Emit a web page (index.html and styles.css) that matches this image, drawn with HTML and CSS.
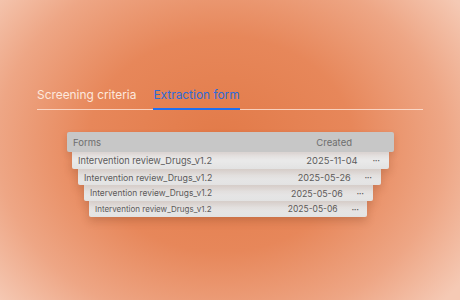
FILE: index.html
```html
<!DOCTYPE html>
<html>
<head>
	<title>Forms</title>
	<link rel="stylesheet" href="styles.css">
</head>
<body>
	<div class="scene">
		<div class="tabs">
			<div class="tab">Screening criteria</div>
			<div class="tab active">Extraction form</div>
		</div>

		<div class="stack">
			<div class="head">
				<span>Forms</span>
				<span class="created">Created</span>
			</div>
			<div class="row r1">
				<span class="name">Intervention review_Drugs_v1.2</span>
				<span class="date">2025-11-04</span>
				<span class="more">&bull;&bull;&bull;</span>
			</div>
			<div class="row r2">
				<span class="name">Intervention review_Drugs_v1.2</span>
				<span class="date">2025-05-26</span>
				<span class="more">&bull;&bull;&bull;</span>
			</div>
			<div class="row r3">
				<span class="name">Intervention review_Drugs_v1.2</span>
				<span class="date">2025-05-06</span>
				<span class="more">&bull;&bull;&bull;</span>
			</div>
			<div class="row r4">
				<span class="name">Intervention review_Drugs_v1.2</span>
				<span class="date">2025-05-06</span>
				<span class="more">&bull;&bull;&bull;</span>
			</div>
		</div>
	</div>
</body>
</html>
```

FILE: styles.css
```css
html, body {
	margin: 0;
	padding: 0;
}

body {
	width: 460px;
	height: 300px;
	overflow: hidden;
	font-family: Inter, "Noto Sans", sans-serif;
	background-color: #e98a5c;
	background-image: radial-gradient(ellipse 64% 80% at 48% 48%, #e27a48 0%, #e7875a 45%, #eea685 76%, #f5c9b4 100%);
}

.scene {
	padding-top: 87px;
}

.tabs {
	display: flex;
	gap: 17px;
	margin: 0 37px;
	border-bottom: 1px solid rgba(255, 235, 225, 0.75);
}

.tab {
	padding-bottom: 7px;
	font-size: 11.9px;
	color: #fde8dd;
}

.tab.active {
	color: #2f6bd8;
	border-bottom: 2px solid #1f6ff0;
	margin-bottom: -1px;
	padding-bottom: 6px;
}

.stack {
	display: flex;
	flex-direction: column;
	align-items: flex-start;
	margin-top: 22px;
}

.head {
	width: 327px;
	height: 20px;
	margin-left: 67px;
	box-sizing: border-box;
	display: flex;
	align-items: center;
	justify-content: space-between;
	padding: 0 42px 0 6px;
	background: #c7c7c7;
	border-radius: 2px;
	color: #6e6e6e;
	font-size: 9.5px;
	box-shadow: 0 3px 6px rgba(90, 40, 20, 0.18);
	position: relative;
	z-index: 5;
}

.row {
	display: grid;
	grid-template-columns: 1fr auto auto;
	align-items: center;
	box-sizing: border-box;
	background: linear-gradient(#f2f2f2, #e2e2e2);
	color: #5c5c5c;
	border-radius: 0 0 2px 2px;
	box-shadow: 0 4px 8px rgba(90, 40, 20, 0.22);
	position: relative;
}

.more {
	font-size: 4px;
	letter-spacing: 0.2px;
	color: #555;
}

.r1 {
	width: 317px;
	height: 17px;
	margin-left: 72px;
	padding: 0 9px 0 6px;
	column-gap: 15px;
	font-size: 9.4px;
	z-index: 4;
}

.r1 .name {
	font-size: 9.2px;
}

.r2 {
	width: 303px;
	height: 16px;
	margin-left: 78px;
	padding: 0 9px 0 6px;
	column-gap: 14px;
	font-size: 9.1px;
	z-index: 3;
}

.r2 .name {
	font-size: 8.8px;
}

.r3 {
	width: 289px;
	height: 16px;
	margin-left: 84px;
	padding: 0 9px 0 6px;
	column-gap: 14px;
	font-size: 8.8px;
	z-index: 2;
}

.r3 .name {
	font-size: 8.4px;
}

.r4 {
	width: 278px;
	height: 16px;
	margin-left: 89px;
	padding: 0 8px 0 6px;
	column-gap: 14px;
	font-size: 8.5px;
	z-index: 1;
}

.r4 .name {
	font-size: 8px;
}
```
